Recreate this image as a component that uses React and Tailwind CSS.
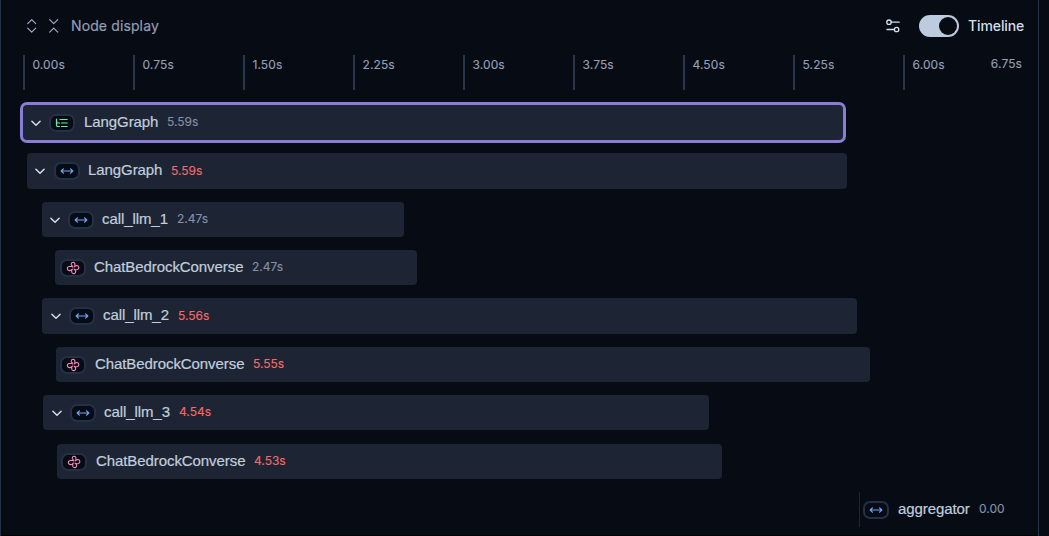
import React from "react";

const ticks = ["0.00s", "0.75s", "1.50s", "2.25s", "3.00s", "3.75s", "4.50s", "5.25s"];

const rows = [
  { name: "LangGraph", time: "5.59s", kind: "tree", open: true, selected: true, box: "ml-[19px] mt-[12px] h-[41px] w-[826px] pl-[7px]", badge: "ml-[7px]", label: "ml-[9px] w-[83px]" },
  { name: "LangGraph", time: "5.59s", kind: "chain", open: true, slow: true, box: "ml-[26px] mt-[10px] h-[36px] w-[820px] pl-[7px]", badge: "ml-[8px]", label: "ml-[8px] w-[83px]" },
  { name: "call_llm_1", time: "2.47s", kind: "chain", open: true, box: "ml-[41px] mt-[13px] h-[35px] w-[362px] pl-[7px]", badge: "ml-[7px]", label: "ml-[8px] w-[75px]" },
  { name: "ChatBedrockConverse", time: "2.47s", kind: "llm", box: "ml-[54px] mt-[13px] h-[35px] w-[362px] pl-[5px]", badge: "", label: "ml-[8px] w-[158px]" },
  { name: "call_llm_2", time: "5.56s", kind: "chain", open: true, slow: true, box: "ml-[41px] mt-[13px] h-[36px] w-[815px] pl-[8px]", badge: "ml-[7px]", label: "ml-[8px] w-[75px]" },
  { name: "ChatBedrockConverse", time: "5.55s", kind: "llm", slow: true, box: "ml-[55px] mt-[13px] h-[35px] w-[814px] pl-[4px]", badge: "", label: "ml-[9px] w-[158px]" },
  { name: "call_llm_3", time: "4.54s", kind: "chain", open: true, slow: true, box: "ml-[42px] mt-[13px] h-[35px] w-[666px] pl-[8px]", badge: "ml-[7px]", label: "ml-[8px] w-[75px]" },
  { name: "ChatBedrockConverse", time: "4.53s", kind: "llm", slow: true, box: "ml-[56px] mt-[14px] h-[35px] w-[665px] pl-[4px]", badge: "", label: "ml-[9px] w-[158px]" },
  { name: "aggregator", time: "0.00", kind: "chain", instant: true, box: "ml-[858px] mt-[13px] h-[35px] w-[160px] pl-[3px]", badge: "", label: "ml-[9px] w-[81px]" },
];

function Chevron() {
  return (
    <svg className="h-[12px] w-[12px] shrink-0 text-[#d3dfed]" viewBox="0 0 12 12" fill="none" stroke="currentColor" strokeWidth="1.5" strokeLinecap="round" strokeLinejoin="round">
      <path d="M1.9 4.3 6 8.3l4.100-4" />
    </svg>
  );
}

function KindIcon({ kind }) {
  if (kind === "tree")
    return (
      <svg className="h-[12px] w-[14px] shrink-0 text-[#6ee7a0]" viewBox="0 0 14 12" fill="none" stroke="currentColor" strokeWidth="1.200" strokeLinecap="round">
        <path d="M1.500 2v6.200q0 1.300 1.300 1.300h1.700M1.500 3.200q0 2.800 1.300 2.800h1.700M5 2.500h7.200M6.500 6h5.700M6.500 9.500h5.700" />
      </svg>
    );
  if (kind === "llm")
    return (
      <svg className="mt-px h-[14px] w-[14px] shrink-0 text-[#f58ab8]" viewBox="0 0 14 14" fill="none" stroke="currentColor" strokeWidth="1.100" strokeLinecap="round" strokeLinejoin="round">
        <path d="M6 4.800 5.200 3.400Q5.100 1.500 7 1.300q2 .1 1.900 1.900v2l1.700-.700q1.900-.100 2.200 1.900.1 2.100-1.900 2.300H9l.700 1.500q.3 1.900-1.500 2.400-2.200.3-2.500-1.600V8.900l-1.500.700Q2 9.900 1.400 8q-.300-2.100 1.600-2.500h2.600" />
        <path d="M6 4.800l.5 1.200M8.900 5.200 8 6M9 8.700 8 8M5.700 8.900l.8-.9" />
      </svg>
    );
  return (
    <svg className="h-[10px] w-[14px] shrink-0 text-[#73a5f5]" viewBox="0 0 14 10" fill="none" stroke="currentColor" strokeWidth="1.200" strokeLinecap="round" strokeLinejoin="round">
      <path d="M1.200 5h11.600M3.400 2.800 1.200 5l2.200 2.200M10.600 2.800 12.800 5l-2.200 2.200" />
    </svg>
  );
}

function Row({ row }) {
  const tone = row.selected
    ? "rounded-[7px] border-[3px] border-[#8a7dd6] bg-[#1d2433]"
    : row.instant
      ? "border-l border-[#1d2433]"
      : "rounded-[4px] bg-[#1d2433]";
  return (
    <div className={`flex shrink-0 items-center whitespace-nowrap ${tone} ${row.box}`}>
      {row.open && <Chevron />}
      <span className={`flex h-[18px] w-[26px] shrink-0 items-center justify-center rounded-[7px] border-2 border-[#243049] bg-[#070b14] ${row.badge}`}>
        <KindIcon kind={row.kind} />
      </span>
      <span className={`mb-[2px] shrink-0 font-['Liberation_Sans',sans-serif] text-[15px] leading-5 tracking-[-0.08px] text-[#c1cede] [-webkit-text-stroke:0.2px] ${row.label}`}>{row.name}</span>
      <span className={`mb-px text-[12px] leading-4 [-webkit-text-stroke:0.15px] ${row.slow ? "text-[#f26b6b]" : "text-[#8490a6]"}`}>{row.time}</span>
    </div>
  );
}

export default function App() {
  return (
    <div className="flex h-[536px] w-[1049px] overflow-hidden bg-[#070b14] font-[Inter,sans-serif]">
      <main className="flex w-[1039px] flex-col border-x border-[#233149]">
        <header className="flex h-[54px] shrink-0 items-center pr-[14px] pb-[2px] pl-[24px]">
          <svg className="h-[16px] w-[13px] text-[#a0acc0]" viewBox="0 0 13 16" fill="none" stroke="currentColor" strokeWidth="1.200" strokeLinecap="round" strokeLinejoin="round">
            <path d="m2.700 5.600 4-4 4 4M2.700 10.200l4 4 4-4" />
          </svg>
          <svg className="ml-[9px] h-[16px] w-[13px] text-[#a0acc0]" viewBox="0 0 13 16" fill="none" stroke="currentColor" strokeWidth="1.200" strokeLinecap="round" strokeLinejoin="round">
            <path d="m2.700 1.600 4 4 4-4M2.700 14.200l4-4 4 4" />
          </svg>
          <span className="ml-[11px] text-[14px] leading-5 tracking-[0.12px] text-[#929db2] [-webkit-text-stroke:0.2px]">Node display</span>
          <svg className="ml-auto h-[16px] w-[16px] text-[#d3dfed]" viewBox="0 0 16 16" fill="none" stroke="currentColor" strokeWidth="1.300" strokeLinecap="round">
            <circle cx="4" cy="4.200" r="2.200" />
            <path d="M6.200 4.200h8M2 11.500h7" />
            <circle cx="11.600" cy="11.500" r="2.200" />
          </svg>
          <span className="ml-[18px] flex h-[22px] w-[40px] items-center justify-end rounded-full bg-[#bccbde] pr-[2px]">
            <span className="h-[18px] w-[18px] rounded-full bg-[#070b14]" />
          </span>
          <span className="ml-[9px] w-[56px] text-[14px] leading-5 font-medium tracking-[-0.1px] text-[#d3dfed]">Timeline</span>
        </header>
        <div className="flex h-[36px] shrink-0 pt-[1px] pl-[22px] text-[12px] leading-4 tracking-[0.1px] text-[#939fb5] [-webkit-text-stroke:0.15px]">
          {ticks.map((t) => (
            <span key={t} className="h-[35px] w-[110px] shrink-0 border-l-2 border-[#27354f] pt-[2px] pl-[7.500px]">{t}</span>
          ))}
          <span className="flex h-[35px] flex-1 justify-between border-l-2 border-[#27354f] pt-[2px] pr-[16px] pl-[7.500px]">
            <span>6.00s</span>
            <span className="-mt-px">6.75s</span>
          </span>
        </div>
        {rows.map((row, i) => (
          <Row key={i} row={row} />
        ))}
        <div className="mt-auto h-px shrink-0 bg-black" />
      </main>
    </div>
  );
}
